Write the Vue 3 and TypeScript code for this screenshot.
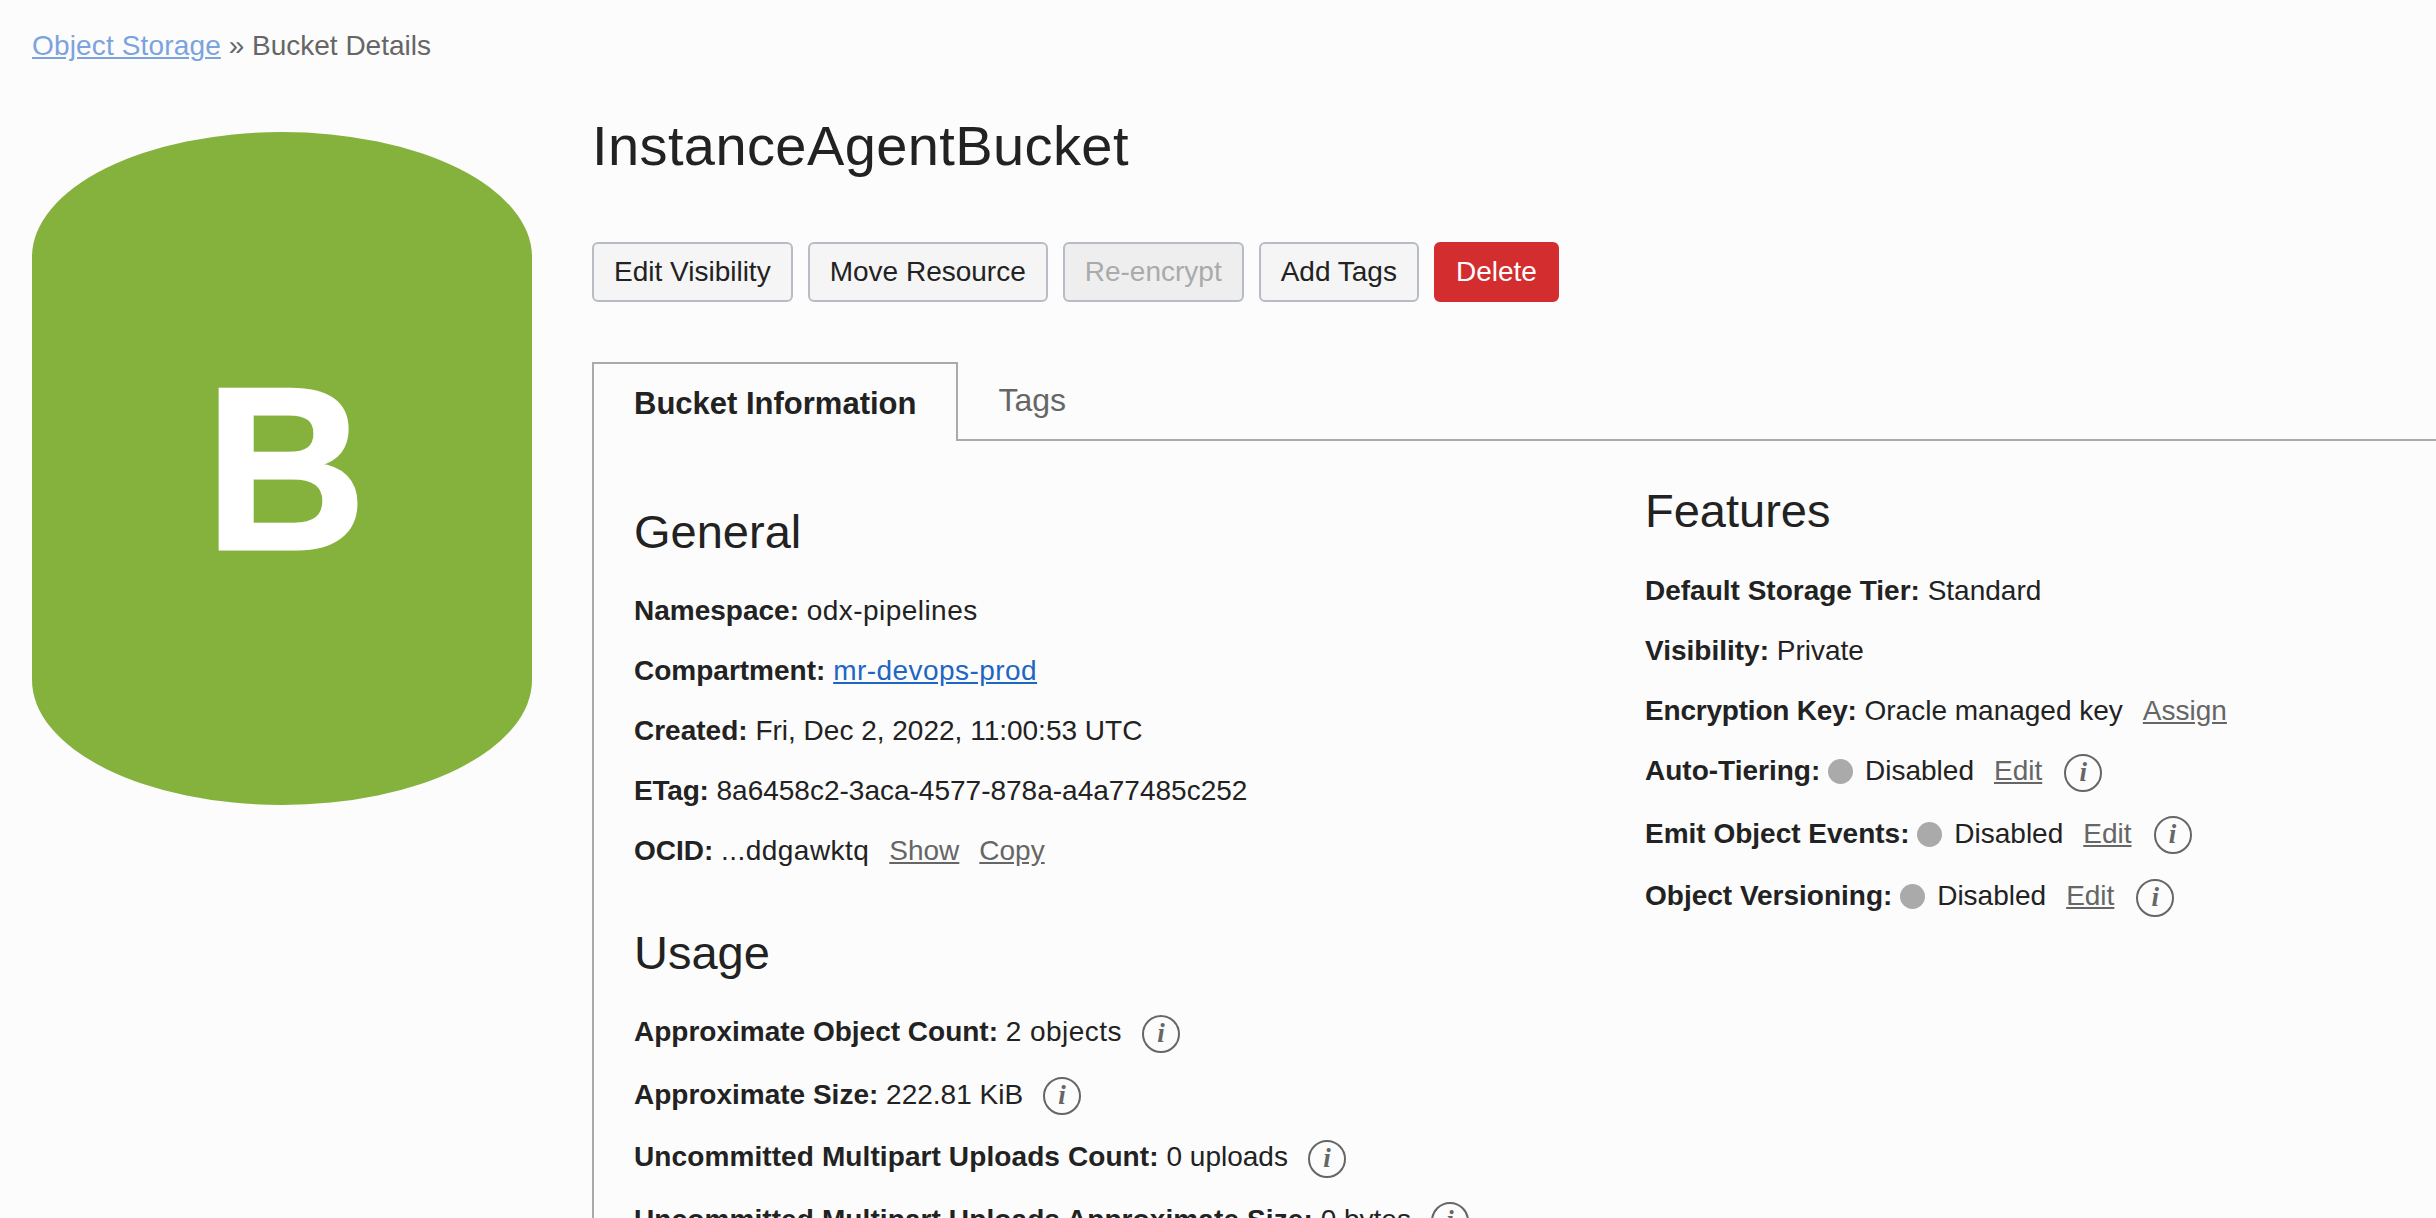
<script setup lang="ts">
type Row = {
  label: string
  value?: string
  link?: string
  status?: string
  actions?: string[]
  info?: boolean
  wide?: boolean
  tight?: boolean
  long?: boolean
}

const buttons = [
  { text: 'Edit Visibility', kind: '' },
  { text: 'Move Resource', kind: '' },
  { text: 'Re-encrypt', kind: 'is-disabled' },
  { text: 'Add Tags', kind: '' },
  { text: 'Delete', kind: 'is-danger' },
]

const general: Row[] = [
  { label: 'Namespace:', value: 'odx-pipelines', wide: true },
  { label: 'Compartment:', link: 'mr-devops-prod', wide: true },
  { label: 'Created:', value: 'Fri, Dec 2, 2022, 11:00:53 UTC' },
  { label: 'ETag:', value: '8a6458c2-3aca-4577-878a-a4a77485c252', tight: true },
  { label: 'OCID:', value: '...ddgawktq', actions: ['Show', 'Copy'], wide: true },
]

const usage: Row[] = [
  { label: 'Approximate Object Count:', value: '2 objects', info: true, wide: true },
  { label: 'Approximate Size:', value: '222.81 KiB', info: true },
  { label: 'Uncommitted Multipart Uploads Count:', value: '0 uploads', info: true, long: true },
  { label: 'Uncommitted Multipart Uploads Approximate Size:', value: '0 bytes', info: true, long: true },
]

const features: Row[] = [
  { label: 'Default Storage Tier:', value: 'Standard' },
  { label: 'Visibility:', value: 'Private' },
  { label: 'Encryption Key:', value: 'Oracle managed key', actions: ['Assign'], tight: true },
  { label: 'Auto-Tiering:', status: 'Disabled', actions: ['Edit'], info: true },
  { label: 'Emit Object Events:', status: 'Disabled', actions: ['Edit'], info: true },
  { label: 'Object Versioning:', status: 'Disabled', actions: ['Edit'], info: true },
]

const sections = [
  { id: 'left', groups: [{ title: 'General', rows: general }, { title: 'Usage', rows: usage }] },
  { id: 'right', groups: [{ title: 'Features', rows: features }] },
]
</script>

<template>
  <div class="page">
    <nav class="breadcrumb">
      <a href="#" class="crumb-link">Object Storage</a> » Bucket Details
    </nav>

    <div class="layout">
      <aside class="bucket-icon">
        <span class="bucket-letter">B</span>
      </aside>

      <main class="details">
        <h1 class="title">InstanceAgentBucket</h1>

        <div class="actions">
          <button v-for="btn in buttons" :key="btn.text" type="button" class="btn" :class="btn.kind">
            {{ btn.text }}
          </button>
        </div>

        <div class="tabs">
          <div class="tab is-active">Bucket Information</div>
          <div class="tab">Tags</div>
          <div class="tab-rest"></div>
        </div>

        <div class="panel">
          <section v-for="col in sections" :key="col.id" class="column" :class="`column-${col.id}`">
            <div v-for="group in col.groups" :key="group.title" class="group">
              <h2 class="group-title">{{ group.title }}</h2>
              <p
                v-for="row in group.rows"
                :key="row.label"
                class="row"
                :class="{ 'has-info': row.info, 'is-wide': row.wide, 'is-tight': row.tight, 'is-long': row.long }"
              >
                <strong>{{ row.label }}</strong>
                {{ ' ' }}
                <span v-if="row.status" class="dot"></span>
                <span v-if="row.status">{{ row.status }}</span>
                <span v-if="row.value" class="value">{{ row.value }}</span>
                <a v-if="row.link" href="#" class="value value-link">{{ row.link }}</a>
                <a v-for="action in row.actions" :key="action" href="#" class="action-link">{{ action }}</a>
                <span v-if="row.info" class="info">i</span>
              </p>
            </div>
          </section>
        </div>
      </main>
    </div>
  </div>
</template>

<style>
html,
body {
  height: 100%;
  overflow: hidden;
  background: #fcfcfc;
}
</style>

<style scoped>
.page {
  box-sizing: border-box;
  height: 100vh;
  overflow: hidden;
  padding: 26px 0 0 32px;
  font-family: 'Liberation Sans', Arial, sans-serif;
  font-size: 28px;
  line-height: 40px;
  color: #222;
  background: #fcfcfc;
}

.breadcrumb {
  height: 40px;
  margin-bottom: 52px;
  color: #666;
}

.crumb-link {
  color: #7ba3de;
  letter-spacing: 0.15px;
}

.layout {
  display: flex;
  align-items: flex-start;
}

.bucket-icon {
  flex: 0 0 500px;
  box-sizing: border-box;
  height: 673px;
  margin-top: 14px;
  padding-left: 8px;
  border-radius: 250px / 125px;
  background: #85b13d;
  display: flex;
  align-items: center;
  justify-content: center;
  color: #fff;
  font-size: 232px;
  font-weight: 700;
  line-height: 1;
}

.bucket-letter {
  transform: scaleX(0.96);
  -webkit-text-stroke: 3px #fff;
}

.details {
  flex: 1;
  min-width: 0;
  margin-left: 60px;
}

.title {
  margin: 0 0 68px;
  font-size: 56px;
  font-weight: 400;
  line-height: 56px;
  letter-spacing: 0.4px;
}

.actions {
  display: flex;
  gap: 15px;
  margin-bottom: 60px;
}

.btn {
  box-sizing: border-box;
  height: 60px;
  padding: 0 20px;
  border: 2px solid #b8bcc4;
  border-radius: 6px;
  background: #f5f5f5;
  color: #222;
  font: inherit;
}

.btn.is-disabled {
  background: #eee;
  color: #aaa;
}

.btn.is-danger {
  border-color: #d32d2f;
  background: #d32d2f;
  color: #fff;
}

.tabs {
  display: flex;
  height: 79px;
}

.tab {
  box-sizing: border-box;
  padding: 18px 40px 0;
  border-bottom: 2px solid #aaa;
  color: #666;
  font-size: 32px;
}

.tab.is-active {
  padding-top: 20px;
  border: 2px solid #aaa;
  border-bottom: 0;
  color: #222;
  font-size: 31px;
  font-weight: 700;
}

.tab-rest {
  flex: 1;
  border-bottom: 2px solid #aaa;
}

.panel {
  display: grid;
  grid-template-columns: 1011px 1fr;
  height: 800px;
  padding: 42px 0 0 40px;
  border-left: 2px solid #aaa;
}

.column-left {
  padding-top: 21px;
}

.column-right .group-title {
  margin-bottom: 32px;
}

.group + .group {
  margin-top: 54px;
}

.group-title {
  margin: 0 0 31px;
  font-size: 47px;
  font-weight: 400;
  line-height: 56px;
}

.row {
  margin: 0 0 20px;
  white-space: nowrap;
}

.row.has-info {
  margin-bottom: 22px;
}

.is-wide .value {
  letter-spacing: 0.45px;
}

.is-tight strong {
  letter-spacing: -0.2px;
}

.is-long strong {
  letter-spacing: 0.1px;
}

.dot {
  display: inline-block;
  width: 25px;
  height: 25px;
  margin-right: 12px;
  border-radius: 50%;
  background: #aaa;
  vertical-align: -4px;
}

.value-link {
  color: #1f66c4;
}

.action-link {
  margin-left: 20px;
  color: #666;
}

.info {
  box-sizing: border-box;
  display: inline-block;
  width: 38px;
  height: 38px;
  margin-left: 20px;
  border: 2.5px solid #666;
  border-radius: 50%;
  color: #666;
  font-family: 'Liberation Serif', serif;
  font-size: 27px;
  font-style: italic;
  font-weight: 700;
  line-height: 33px;
  text-align: center;
  vertical-align: middle;
}

.action-link + .info {
  margin-left: 22px;
}
</style>
